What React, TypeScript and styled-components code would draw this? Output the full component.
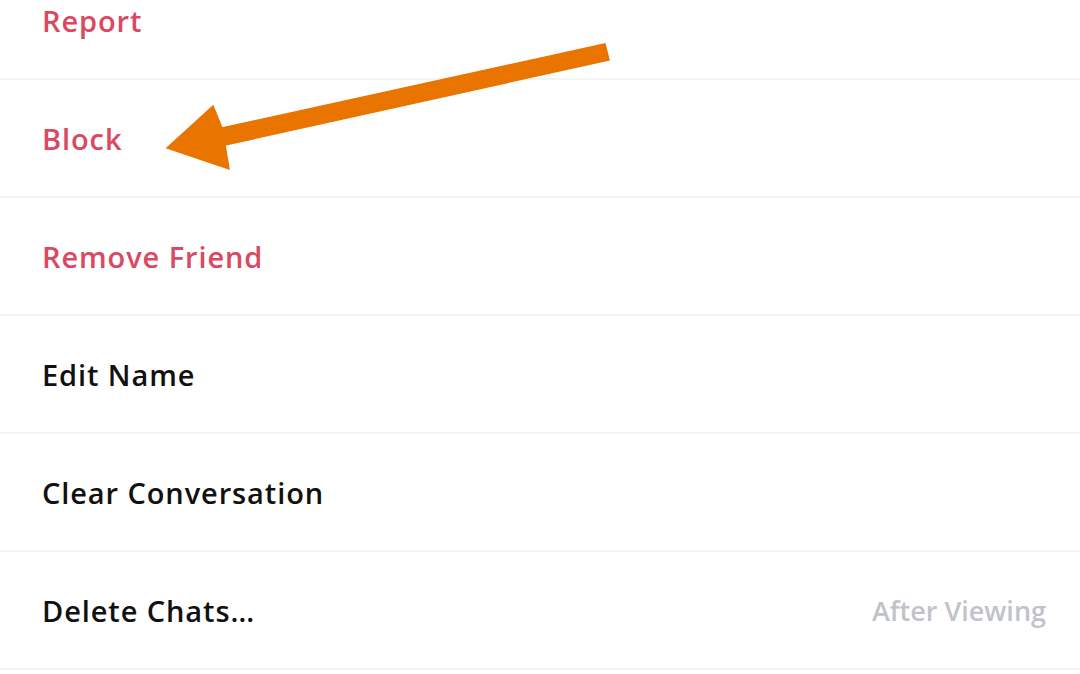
import React from 'react';
import styled, { createGlobalStyle } from 'styled-components';

const GlobalStyle = createGlobalStyle`
  html, body {
    margin: 0;
    padding: 0;
    background: #ffffff;
    overflow: hidden;
  }
  body {
    font-family: 'Open Sans', 'Noto Sans', sans-serif;
  }
`;

const Screen = styled.div`
  position: relative;
  width: 1080px;
  height: 674px;
  overflow: hidden;
  background: #ffffff;
`;

const MenuList = styled.div`
  display: flex;
  flex-direction: column;
  margin-top: -38px;
`;

const MenuRow = styled.div`
  display: flex;
  align-items: center;
  justify-content: space-between;
  height: 116px;
  padding: 0 34px 0 42px;
  border-bottom: 2px solid #f3f3f3;
`;

const RowLabel = styled.span<{ danger?: boolean }>`
  font-size: 29px;
  font-weight: 600;
  letter-spacing: 0.9px;
  color: ${props => (props.danger ? '#da4961' : '#111111')};
`;

const RowValue = styled.span`
  font-size: 27px;
  font-weight: 600;
  color: #c0c4c9;
`;

const ArrowOverlay = styled.svg`
  position: absolute;
  left: 0;
  top: 0;
  pointer-events: none;
`;

type Item = { label: string; danger?: boolean; value?: string };

const items: Item[] = [
  { label: 'Report', danger: true },
  { label: 'Block', danger: true },
  { label: 'Remove Friend', danger: true },
  { label: 'Edit Name' },
  { label: 'Clear Conversation' },
  { label: 'Delete Chats…', value: 'After Viewing' },
];

const App: React.FC = () => {
  return (
    <>
      <GlobalStyle />
      <Screen>
        <MenuList>
          {items.map(item => (
            <MenuRow key={item.label}>
              <RowLabel danger={item.danger}>{item.label}</RowLabel>
              {item.value && <RowValue>{item.value}</RowValue>}
            </MenuRow>
          ))}
        </MenuList>
        <ArrowOverlay width="1080" height="674" viewBox="0 0 1080 674">
          <polygon
            points="605,44 609,60 225,145 229,169 167,148 213,106 222,128"
            fill="#e97400"
            stroke="#e97400"
            strokeWidth="1.5"
            strokeLinejoin="miter"
          />
        </ArrowOverlay>
      </Screen>
    </>
  );
};

export default App;
